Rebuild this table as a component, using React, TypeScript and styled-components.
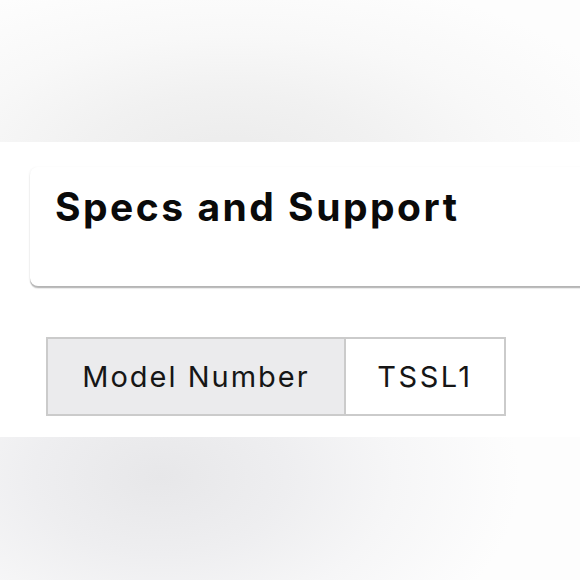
import React from "react";
import styled, { createGlobalStyle } from "styled-components";

const Global = createGlobalStyle`
  *, *::before, *::after { box-sizing: border-box; }
  html, body { margin: 0; padding: 0; background: #fdfdfd; }
  body { font-family: "Inter", "Lato", "Liberation Sans", sans-serif; color: #111; }
`;

const Page = styled.div`
  width: 580px;
  height: 580px;
  display: flex;
  flex-direction: column;
  overflow: hidden;
`;

const Hero = styled.div`
  height: 142px;
  flex: none;
  background: radial-gradient(ellipse 420px 190px at 230px 160px, #ebebeb 0%, #f1f1f1 35%, #f8f8f8 65%, #fdfdfd 100%);
`;

const Section = styled.section`
  flex: none;
  height: 295px;
  background: #ffffff;
  padding: 25px 0 0 30px;
  display: flex;
  flex-direction: column;
`;

const Card = styled.div`
  height: 119px;
  margin-right: -20px;
  background: #fff;
  border-radius: 8px 0 0 8px;
  box-shadow: 0 2px 1px rgba(0, 0, 0, 0.24), 0 3px 1px rgba(0, 0, 0, 0.06), -1px 0 2px rgba(0, 0, 0, 0.04);
  padding: 16px 0 0 25px;
`;

const Title = styled.h2`
  margin: 0;
  font-family: "Inter", "Lato", "Liberation Sans", sans-serif;
  font-weight: 700;
  font-size: 39px;
  line-height: 48px;
  color: #0a0a0a;
  letter-spacing: 2.5px;
`;

const Table = styled.div`
  display: flex;
  margin: 51px 0 0 16px;
  width: 460px;
  height: 79px;
  border: 2px solid #cbcbcb;
`;

const Cell = styled.div<{ $head?: boolean; $w: number; $ls: number }>`
  width: ${(p) => p.$w}px;
  flex: none;
  display: flex;
  align-items: center;
  justify-content: center;
  background: ${(p) => (p.$head ? "#ebebed" : "#ffffff")};
  border-right: ${(p) => (p.$head ? "2px solid #cbcbcb" : "none")};
  font-family: "Inter", "Lato", "Liberation Sans", sans-serif;
  font-size: 29px;
  font-weight: 400;
  letter-spacing: ${(p) => p.$ls}px;
  color: #161616;
`;

const Footer = styled.div`
  flex: 1;
  background: radial-gradient(ellipse 360px 220px at 160px 40px, #e7e7e9 0%, #eeeef0 35%, #f6f6f7 65%, #fdfdfd 100%);
`;

export default function App() {
  return (
    <>
      <Global />
      <Page>
        <Hero />
        <Section>
          <Card>
            <Title>Specs and Support</Title>
          </Card>
          <Table>
            <Cell $head $w={298} $ls={2}>Model Number</Cell>
            <Cell $w={158} $ls={2.5}>TSSL1</Cell>
          </Table>
        </Section>
        <Footer />
      </Page>
    </>
  );
}
